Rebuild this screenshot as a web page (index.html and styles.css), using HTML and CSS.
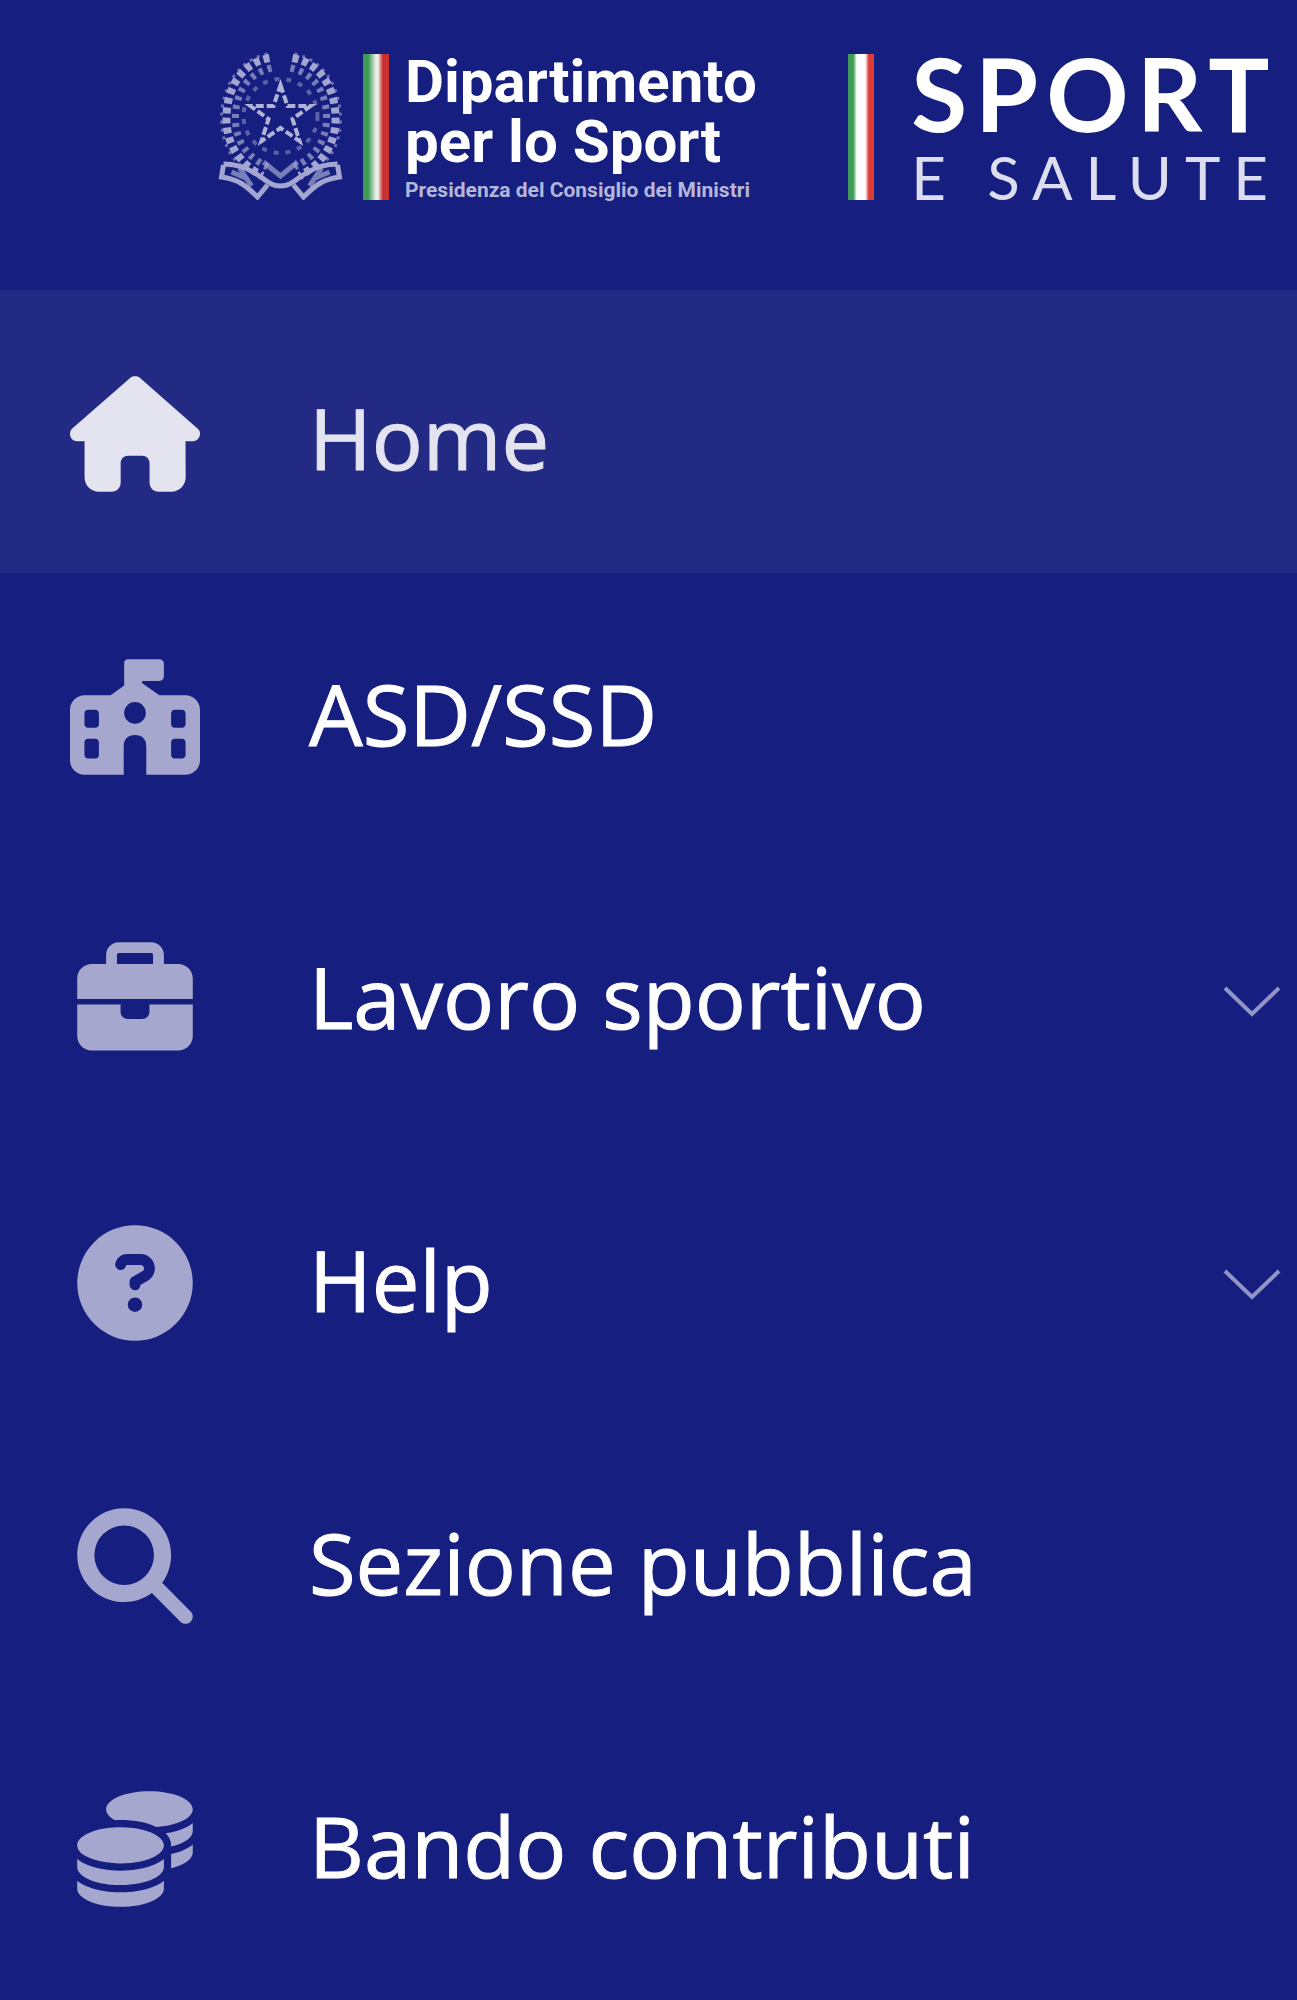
FILE: index.html
```html
<!DOCTYPE html>
<html lang="it">
<head>
  <meta charset="UTF-8" />
  <meta name="viewport" content="width=device-width, initial-scale=1.0"/>
  <title>Registro Sport</title>
  <link rel="stylesheet" href="styles.css">
</head>
<body>
  <div class="sidebar">
    <header class="logos">
      <div class="logo">
        <svg class="emblem" viewBox="0 0 127 148" aria-hidden="true">
          <!-- wreath -->
          <g fill="none" stroke="#a3a6d0">
            <path d="M52 6C20 12 8 42 9 70c1 24 14 42 36 54" stroke-width="8" stroke-dasharray="6 4"/>
            <path d="M75 6c32 6 44 36 43 64-1 24-14 42-36 54" stroke-width="8" stroke-dasharray="6 4"/>
            <path d="M54 16C28 22 17 44 18 69c1 21 12 36 32 46" stroke-width="7" stroke-dasharray="4 5" opacity=".7"/>
            <path d="M73 16c26 6 37 28 36 53-1 21-12 36-32 46" stroke-width="7" stroke-dasharray="4 5" opacity=".7"/>
            <path d="M50 2C18 8 3 40 4 70c1 20 8 34 20 44M77 2c32 6 47 38 46 68-1 20-8 34-20 44" stroke-width="3" stroke-dasharray="3 5" opacity=".6"/>
          </g>
          <!-- gear -->
          <circle cx="63" cy="64" r="37" fill="none" stroke="#5c61a8" stroke-width="4" stroke-dasharray="5 7"/>
          <!-- star -->
          <path d="M63 33l7 21h23L75 67l7 22-19-13-19 13 7-22-18-13h23z" fill="none" stroke="#b0b3d8" stroke-width="4" stroke-dasharray="8 3"/>
          <!-- ribbon -->
          <g fill="none" stroke="#a3a6d0" stroke-width="5">
            <path d="M6 112c14 0 24 4 36 12 7 5 12 10 21 10s14-5 21-10c12-8 22-12 36-12"/>
            <path d="M6 113l-2 12c16 2 24 8 36 20l10-12M120 113l2 12c-16 2-24 8-36 20l-10-12"/>
            <path d="M14 120l14 6M22 116l12 18M112 120l-14 6M104 116l-12 18M46 110l17 14 17-14" opacity=".7"/>
          </g>
        </svg>
        <span class="flag flag-soft"></span>
        <div class="dept">
          <div class="dept-name">Dipartimento<br>per lo Sport</div>
          <div class="dept-sub">Presidenza del Consiglio dei Ministri</div>
        </div>
      </div>
      <div class="logo">
        <span class="flag"></span>
        <div class="sport">
          <div class="sport-name">SPORT</div>
          <div class="sport-sub">E SALUTE</div>
        </div>
      </div>
    </header>

    <nav class="menu">
      <a class="item active" href="#">
        <svg class="icon" viewBox="0 0 576 512" aria-hidden="true"><path d="M575.800 255.500c0 18-15 32.100-32 32.100h-32l.7 160.200c0 35-28 64.200-64 64.200h-56c-22 0-40-18-40-40v-88c0-17.700-14.300-32-32-32h-64c-17.700 0-32 14.300-32 32v88c0 22-18 40-40 40h-56c-36 0-64-28-64-64V287.600H32c-18 0-32-14-32-32.100 0-9 3-17 10-24L266.400 8c7-7 15-8 22-8s15 2 21 7L564.800 231.500c8 7 12 15 11 24z"/></svg>
        <span class="label">Home</span>
      </a>
      <a class="item" href="#">
        <svg class="icon" viewBox="0 0 576 512" aria-hidden="true"><path fill-rule="evenodd" d="M256 0h140c11 0 20 8 20 18v60c0 10-9 18-20 18h-76v10l76 54h116c35 0 64 29 64 64v224c0 35-29 64-64 64H338V384c0-28-18-48-50-48s-50 20-50 48v128H64c-35 0-64-29-64-64V224c0-35 29-64 64-64h116l60-44V16c0-9 7-16 16-16zM288 190a48 48 0 1 0 0 96 48 48 0 1 0 0-96zM80 224c-9 0-16 7-16 16v48c0 9 7 16 16 16h32c9 0 16-7 16-16v-48c0-9-7-16-16-16zm384 0c-9 0-16 7-16 16v48c0 9 7 16 16 16h32c9 0 16-7 16-16v-48c0-9-7-16-16-16zM80 352c-9 0-16 7-16 16v56c0 9 7 16 16 16h32c9 0 16-7 16-16v-56c0-9-7-16-16-16zm384 0c-9 0-16 7-16 16v56c0 9 7 16 16 16h32c9 0 16-7 16-16v-56c0-9-7-16-16-16z"/></svg>
        <span class="label">ASD/SSD</span>
      </a>
      <button class="item" type="button" aria-expanded="false">
        <svg class="icon" viewBox="-32 0 576 512" aria-hidden="true"><path fill-rule="evenodd" d="M184 48h144c4.400 0 8 3.600 8 8v40H176V56c0-4.400 3.600-8 8-8zm-56 8v40H64c-35.300 0-64 28.700-64 64v92h512v-92c0-35.300-28.700-64-64-64h-64V56c0-30.900-25.100-56-56-56H184c-30.900 0-56 25.100-56 56zM512 276H320v32c0 17.700-14.300 32-32 32h-64c-17.700 0-32-14.300-32-32v-32H0v140c0 35.300 28.700 64 64 64h384c35.300 0 64-28.700 64-64z"/></svg>
        <span class="label">Lavoro sportivo</span>
        <svg class="chevron" viewBox="0 0 58 32" aria-hidden="true"><path d="M2 3l27 26L56 3"/></svg>
      </button>
      <button class="item" type="button" aria-expanded="false">
        <svg class="icon" viewBox="-32 0 576 512" aria-hidden="true"><path fill-rule="evenodd" d="M256 512A256 256 0 1 0 256 0a256 256 0 1 0 0 512zM169.800 165.300c7.900-22.300 29.100-37.300 52.800-37.300h58.300c34.900 0 63.100 28.300 63.100 63.100 0 22.600-12.100 43.500-31.700 54.800L280 264.400c-.2 13-10.900 23.600-24 23.600-13.300 0-24-10.700-24-24v-13.500c0-8.600 4.600-16.500 12.100-20.800l44.300-25.400c4.700-2.700 7.600-7.700 7.600-13.100 0-8.400-6.800-15.100-15.100-15.100h-58.300c-3.400 0-6.400 2.100-7.500 5.300l-.4 1.200c-4.400 12.500-18.200 19-30.600 14.600s-19-18.200-14.600-30.600zM224 352a32 32 0 1 1 64 0 32 32 0 1 1-64 0z"/></svg>
        <span class="label">Help</span>
        <svg class="chevron" viewBox="0 0 58 32" aria-hidden="true"><path d="M2 3l27 26L56 3"/></svg>
      </button>
      <a class="item" href="#">
        <svg class="icon" viewBox="-32 0 576 512" aria-hidden="true"><path fill-rule="evenodd" d="M416 208c0 45.900-14.900 88.300-40 122.700l126.600 126.700c12.500 12.500 12.500 32.800 0 45.300s-32.800 12.500-45.300 0L330.700 376c-34.400 25.200-76.800 40-122.700 40C93.100 416 0 322.900 0 208S93.100 0 208 0s208 93.100 208 208zM208 340a132 132 0 1 0 0-264 132 132 0 1 0 0 264z"/></svg>
        <span class="label">Sezione pubblica</span>
      </a>
      <a class="item" href="#">
        <svg class="icon" viewBox="-32 0 576 512" aria-hidden="true"><path d="M512 80c0 18-14.300 34.600-38.400 48-29.100 16.100-72.500 27.500-122.300 30.900-3.700-1.800-7.400-3.500-11.300-5C300.600 137.400 248.200 128 192 128c-8.300 0-16.400.2-24.500.6l-1.100-.6C142.300 114.600 128 98 128 80c0-44.200 86-80 192-80s192 35.800 192 80zM160.700 161.100c10.200-.7 20.700-1.100 31.300-1.100 62.200 0 117.400 12.300 152.500 31.400C369.300 204.900 384 221.700 384 240c0 4-.7 7.900-2.100 11.700-4.600 13.200-17 25.300-35 35.500h-.1l-.9.500c-35 19.400-90.800 32-153.900 32-59.800 0-112.900-11.300-148.200-29.100-1.900-.9-3.700-1.900-5.500-2.900C14.300 274.600 0 258 0 240c0-34.800 53.400-64.500 128-75.400 10.500-1.500 21.400-2.700 32.700-3.500zM416 240c0-21.900-10.600-39.900-24.100-53.400 28.300-4.400 54.200-11.400 76.200-20.500 16.300-6.800 31.500-15.200 43.900-25.500V176c0 19.300-16.500 37.100-43.800 50.900-14.600 7.400-32.400 13.700-52.400 18.500.1-1.800.2-3.500.2-5.300zM384 336c0 18-14.300 34.600-38.400 48-1.800 1-3.600 1.900-5.500 2.900C304.900 404.700 251.800 416 192 416c-62.800 0-118.600-12.600-153.600-32C14.300 370.600 0 354 0 336v-35.400c12.500 10.300 27.600 18.700 43.900 25.500C83.400 342.600 135.800 352 192 352s108.600-9.400 148.100-25.900c7.800-3.200 15.300-6.900 22.400-10.900 6.100-3.400 11.800-7.200 17.200-11.200 1.500-1.100 2.900-2.300 4.300-3.400zM416 336v-57.900c19-4.200 36.500-9.500 52.100-16 16.300-6.800 31.500-15.200 43.900-25.500V272c0 10.500-5 21-14.900 30.900-16.300 16.300-45 29.700-81.300 38.400.1-1.700.2-3.500.2-5.300zM192 448c56.200 0 108.600-9.400 148.100-25.900 16.300-6.800 31.500-15.200 43.900-25.500V432c0 44.200-86 80-192 80S0 476.200 0 432v-35.400c12.500 10.300 27.600 18.700 43.900 25.500C83.400 438.600 135.800 448 192 448z"/></svg>
        <span class="label">Bando contributi</span>
      </a>
    </nav>
  </div>
</body>
</html>
```
FILE: styles.css
```css
* {
  box-sizing: border-box;
}

body {
  margin: 0;
  min-height: 100vh;
  background-color: #161e7f;
  color: #ffffff;
  font-family: "Open Sans", "Noto Sans", sans-serif;
}

.sidebar {
  width: 100%;
}

/* logos */
.logos {
  display: flex;
  justify-content: space-between;
  align-items: flex-start;
  padding: 52px 16px 88px 217px;
}

.logo {
  display: flex;
  align-items: flex-start;
  height: 150px;
}

.emblem {
  width: 128px;
  height: 148px;
  margin-right: 18px;
}

.flag {
  width: 26px;
  height: 146px;
  margin-top: 2px;
  background: linear-gradient(90deg, #3f9a55 0 20%, #ffffff 34% 66%, #dd3b38 80%);
}

.flag-soft {
  background: linear-gradient(90deg, #3f9a55 0 20%, #e9efe6 50% 58%, #c93030 76%);
}

.dept {
  margin-left: 16px;
  font-family: Roboto, sans-serif;
  font-weight: 700;
  white-space: nowrap;
}

.dept-name {
  font-size: 60px;
  line-height: 60px;
}

.dept-sub {
  color: #b4b6da;
  font-size: 21px;
  line-height: 36px;
}

.sport {
  margin-left: 37px;
  font-family: Lato, sans-serif;
  white-space: nowrap;
}

.sport-name {
  font-size: 102px;
  font-weight: 700;
  line-height: 82px;
  letter-spacing: 8px;
}

.sport-sub {
  color: #dcddee;
  font-size: 60px;
  line-height: 86px;
  letter-spacing: 13px;
}

/* menu */
.menu {
  display: flex;
  flex-direction: column;
}

.item {
  display: flex;
  align-items: center;
  width: 100%;
  height: 283px;
  padding: 0 16px 0 70px;
  border: none;
  background: none;
  color: #ffffff;
  font-family: inherit;
  font-size: 85px;
  line-height: 120px;
  text-align: left;
  text-decoration: none;
  -webkit-text-stroke: 1px currentColor;
  cursor: pointer;
}

.item.active {
  background-color: #232a83;
  color: #e3e4ef;
}

.icon {
  flex: none;
  width: 130px;
  height: 116px;
  margin-top: 4px;
  margin-right: 109px;
  fill: #a5a7cf;
}

.item.active .icon {
  fill: #e3e4ef;
}

.label {
  flex: 1;
  padding-bottom: 4px;
  white-space: nowrap;
}

.item.active .label {
  padding-top: 14px;
}

.chevron {
  flex: none;
  width: 58px;
  height: 32px;
  margin-top: 6px;
  fill: none;
  stroke: #9194c6;
  stroke-width: 4;
}
```
